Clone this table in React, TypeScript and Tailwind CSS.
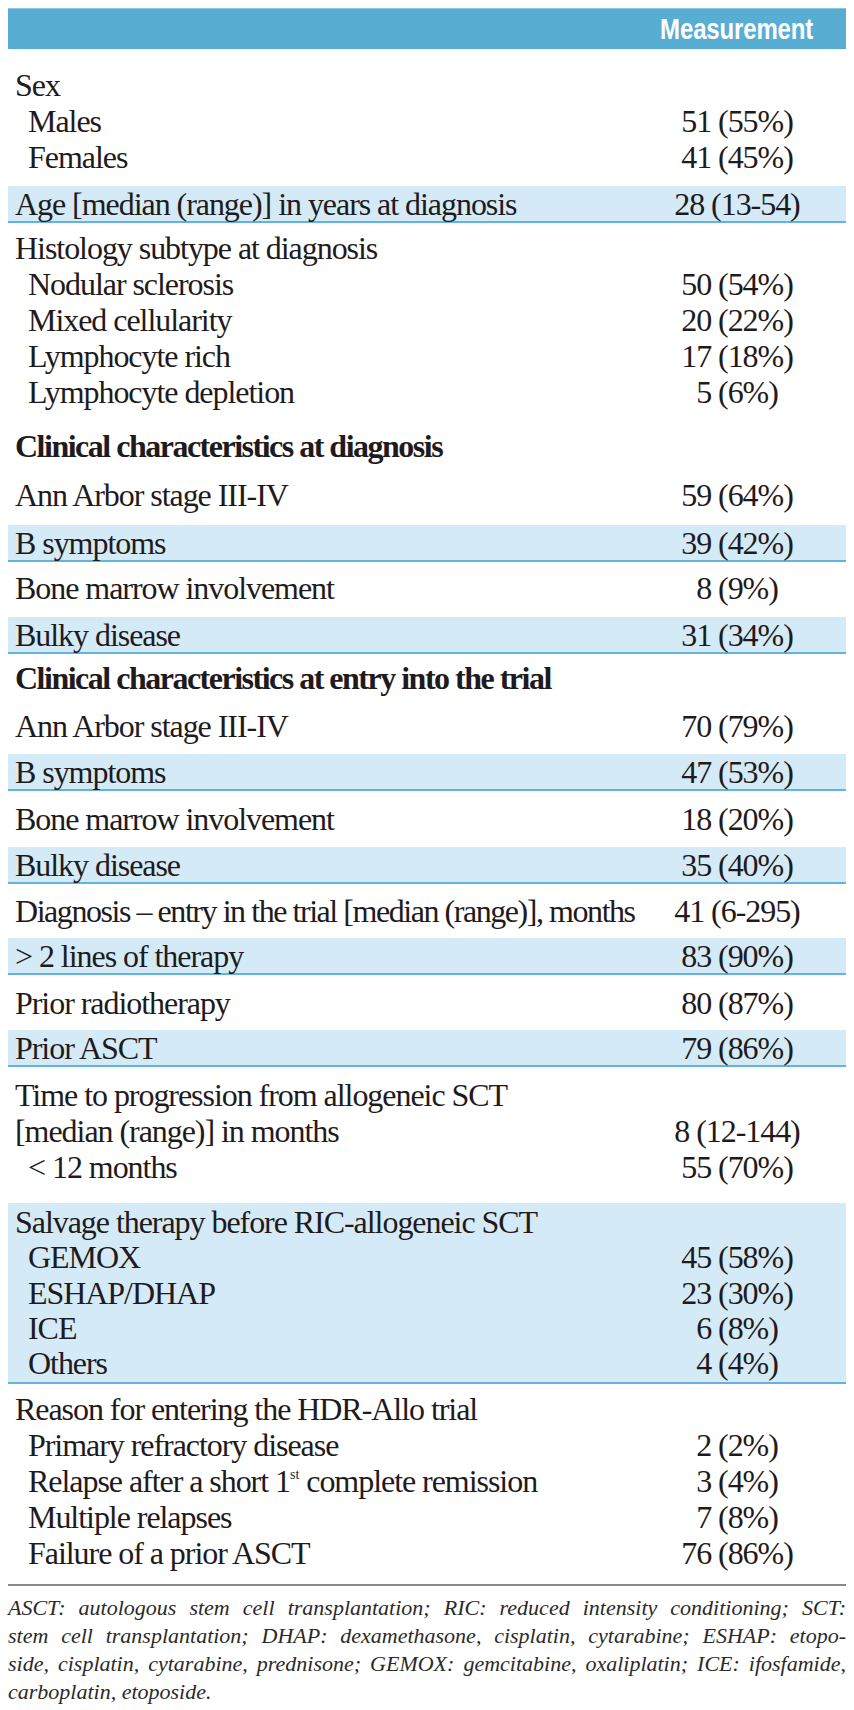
import React from "react";

const serif = "font-['Liberation_Serif','Times_New_Roman',serif]";

type LineProps = {
  label: React.ReactNode;
  value?: string;
  indent?: boolean;
  bold?: boolean;
  tall?: "g" | "s";
};

function Line({ label, value, indent, bold, tall }: LineProps) {
  const h = tall === "s" ? "h-[35.25px]" : "h-[36px]";
  return (
    <div className={`grid grid-cols-[minmax(0,1fr)_218px] items-center ${h}`}>
      <div
        className={`${indent ? "pl-[20px]" : "pl-[7px]"} ${bold ? "font-bold tracking-[-1.5px]" : "font-normal"} whitespace-nowrap`}
      >
        {label}
      </div>
      <div className="text-center whitespace-nowrap">{value}</div>
    </div>
  );
}

function Row({
  label,
  value,
  band,
  mt,
  tight,
}: {
  label: React.ReactNode;
  value?: string;
  band?: boolean;
  mt: string;
  tight?: boolean;
}) {
  return (
    <div
      className={`${mt} grid grid-cols-[minmax(0,1fr)_218px] items-center h-[37px] border-b-2 ${
        band ? "bg-[#d4eaf7] border-[#62b4da]" : "border-transparent"
      }`}
    >
      <div className={`pl-[7px] whitespace-nowrap ${tight ? "tracking-[-1.45px]" : ""}`}>{label}</div>
      <div className="text-center whitespace-nowrap">{value}</div>
    </div>
  );
}

function FootLine({ children, last }: { children: React.ReactNode; last?: boolean }) {
  return (
    <div
      className={`h-[28px] leading-[28px] whitespace-nowrap ${
        last ? "text-left" : "text-justify [text-align-last:justify]"
      }`}
    >
      {children}
    </div>
  );
}

export default function App() {
  return (
    <div className={`w-[854px] h-[1710px] bg-white ${serif} text-[#1f1b1c]`}>
      <div className="mx-[8px] flex flex-col text-[32px] tracking-[-1.05px] leading-[36px]">
        {/* Header */}
        <div className="mt-[8px] h-[41px] bg-[#58add3] border-t border-[#8cc8e4] grid grid-cols-[minmax(0,1fr)_218px] items-center">
          <div />
          <div className="text-center text-white font-bold text-[30px] tracking-[-0.2px] font-['Liberation_Sans','Arial',sans-serif]">
            <span className="inline-block scale-x-[0.8]">Measurement</span>
          </div>
        </div>

        {/* Sex */}
        <div className="mt-[18px] flex flex-col">
          <Line label="Sex" />
          <Line label="Males" value="51 (55%)" indent />
          <Line label="Females" value="41 (45%)" indent />
        </div>

        <Row mt="mt-[11px]" band label="Age [median (range)] in years at diagnosis" value="28 (13-54)" />

        {/* Histology */}
        <div className="mt-[7px] flex flex-col">
          <Line label="Histology subtype at diagnosis" />
          <Line label="Nodular sclerosis" value="50 (54%)" indent />
          <Line label="Mixed cellularity" value="20 (22%)" indent />
          <Line label="Lymphocyte rich" value="17 (18%)" indent />
          <Line label="Lymphocyte depletion" value="5 (6%)" indent />
        </div>

        <div className="mt-[18px]">
          <Line label="Clinical characteristics at diagnosis" bold />
        </div>
        <Row mt="mt-[13px]" label="Ann Arbor stage III-IV" value="59 (64%)" />
        <Row mt="mt-[11px]" band label="B symptoms" value="39 (42%)" />
        <Row mt="mt-[8px]" label="Bone marrow involvement" value="8 (9%)" />
        <Row mt="mt-[10px]" band label="Bulky disease" value="31 (34%)" />

        <div className="mt-[6px]">
          <Line label="Clinical characteristics at entry into the trial" bold />
        </div>
        <Row mt="mt-[12px]" label="Ann Arbor stage III-IV" value="70 (79%)" />
        <Row mt="mt-[9px]" band label="B symptoms" value="47 (53%)" />
        <Row mt="mt-[10px]" label="Bone marrow involvement" value="18 (20%)" />
        <Row mt="mt-[9px]" band label="Bulky disease" value="35 (40%)" />
        <Row
          mt="mt-[9px]"
          tight
          label="Diagnosis – entry in the trial [median (range)], months"
          value="41 (6-295)"
        />
        <Row mt="mt-[8px]" band label="> 2 lines of therapy" value="83 (90%)" />
        <Row mt="mt-[10px]" label="Prior radiotherapy" value="80 (87%)" />
        <Row mt="mt-[8px]" band label="Prior ASCT" value="79 (86%)" />

        {/* Time to progression */}
        <div className="mt-[10px] flex flex-col">
          <Line label="Time to progression from allogeneic SCT" />
          <Line label="[median (range)] in months" value="8 (12-144)" />
          <Line label="< 12 months" value="55 (70%)" indent />
        </div>

        {/* Salvage */}
        <div className="mt-[18px] flex flex-col bg-[#d4eaf7] border-b-2 border-[#62b4da] pt-[1px] pb-[2px]">
          <Line label="Salvage therapy before RIC-allogeneic SCT" tall="s" />
          <Line label="GEMOX" value="45 (58%)" indent tall="s" />
          <Line label="ESHAP/DHAP" value="23 (30%)" indent tall="s" />
          <Line label="ICE" value="6 (8%)" indent tall="s" />
          <Line label="Others" value="4 (4%)" indent tall="s" />
        </div>

        {/* Reason */}
        <div className="mt-[7px] flex flex-col">
          <Line label="Reason for entering the HDR-Allo trial" />
          <Line label="Primary refractory disease" value="2 (2%)" indent />
          <Line
            label={
              <>
                Relapse after a short 1
                <span className="align-top text-[14px] leading-none tracking-normal relative top-[5px]">st</span>{" "}
                complete remission
              </>
            }
            value="3 (4%)"
            indent
          />
          <Line label="Multiple relapses" value="7 (8%)" indent />
          <Line label="Failure of a prior ASCT" value="76 (86%)" indent />
        </div>

        <div className="mt-[13px] h-[2px] bg-[#8a8a8a]" />

        <div className="mt-[8px] flex flex-col italic text-[22px] tracking-normal text-[#2a2a2a]">
          <FootLine>
            ASCT: autologous stem cell transplantation; RIC: reduced intensity conditioning; SCT:
          </FootLine>
          <FootLine>
            stem cell transplantation; DHAP: dexamethasone, cisplatin, cytarabine; ESHAP: etopo-
          </FootLine>
          <FootLine>
            side, cisplatin, cytarabine, prednisone; GEMOX: gemcitabine, oxaliplatin; ICE: ifosfamide,
          </FootLine>
          <FootLine last>carboplatin, etoposide.</FootLine>
        </div>
      </div>
    </div>
  );
}
